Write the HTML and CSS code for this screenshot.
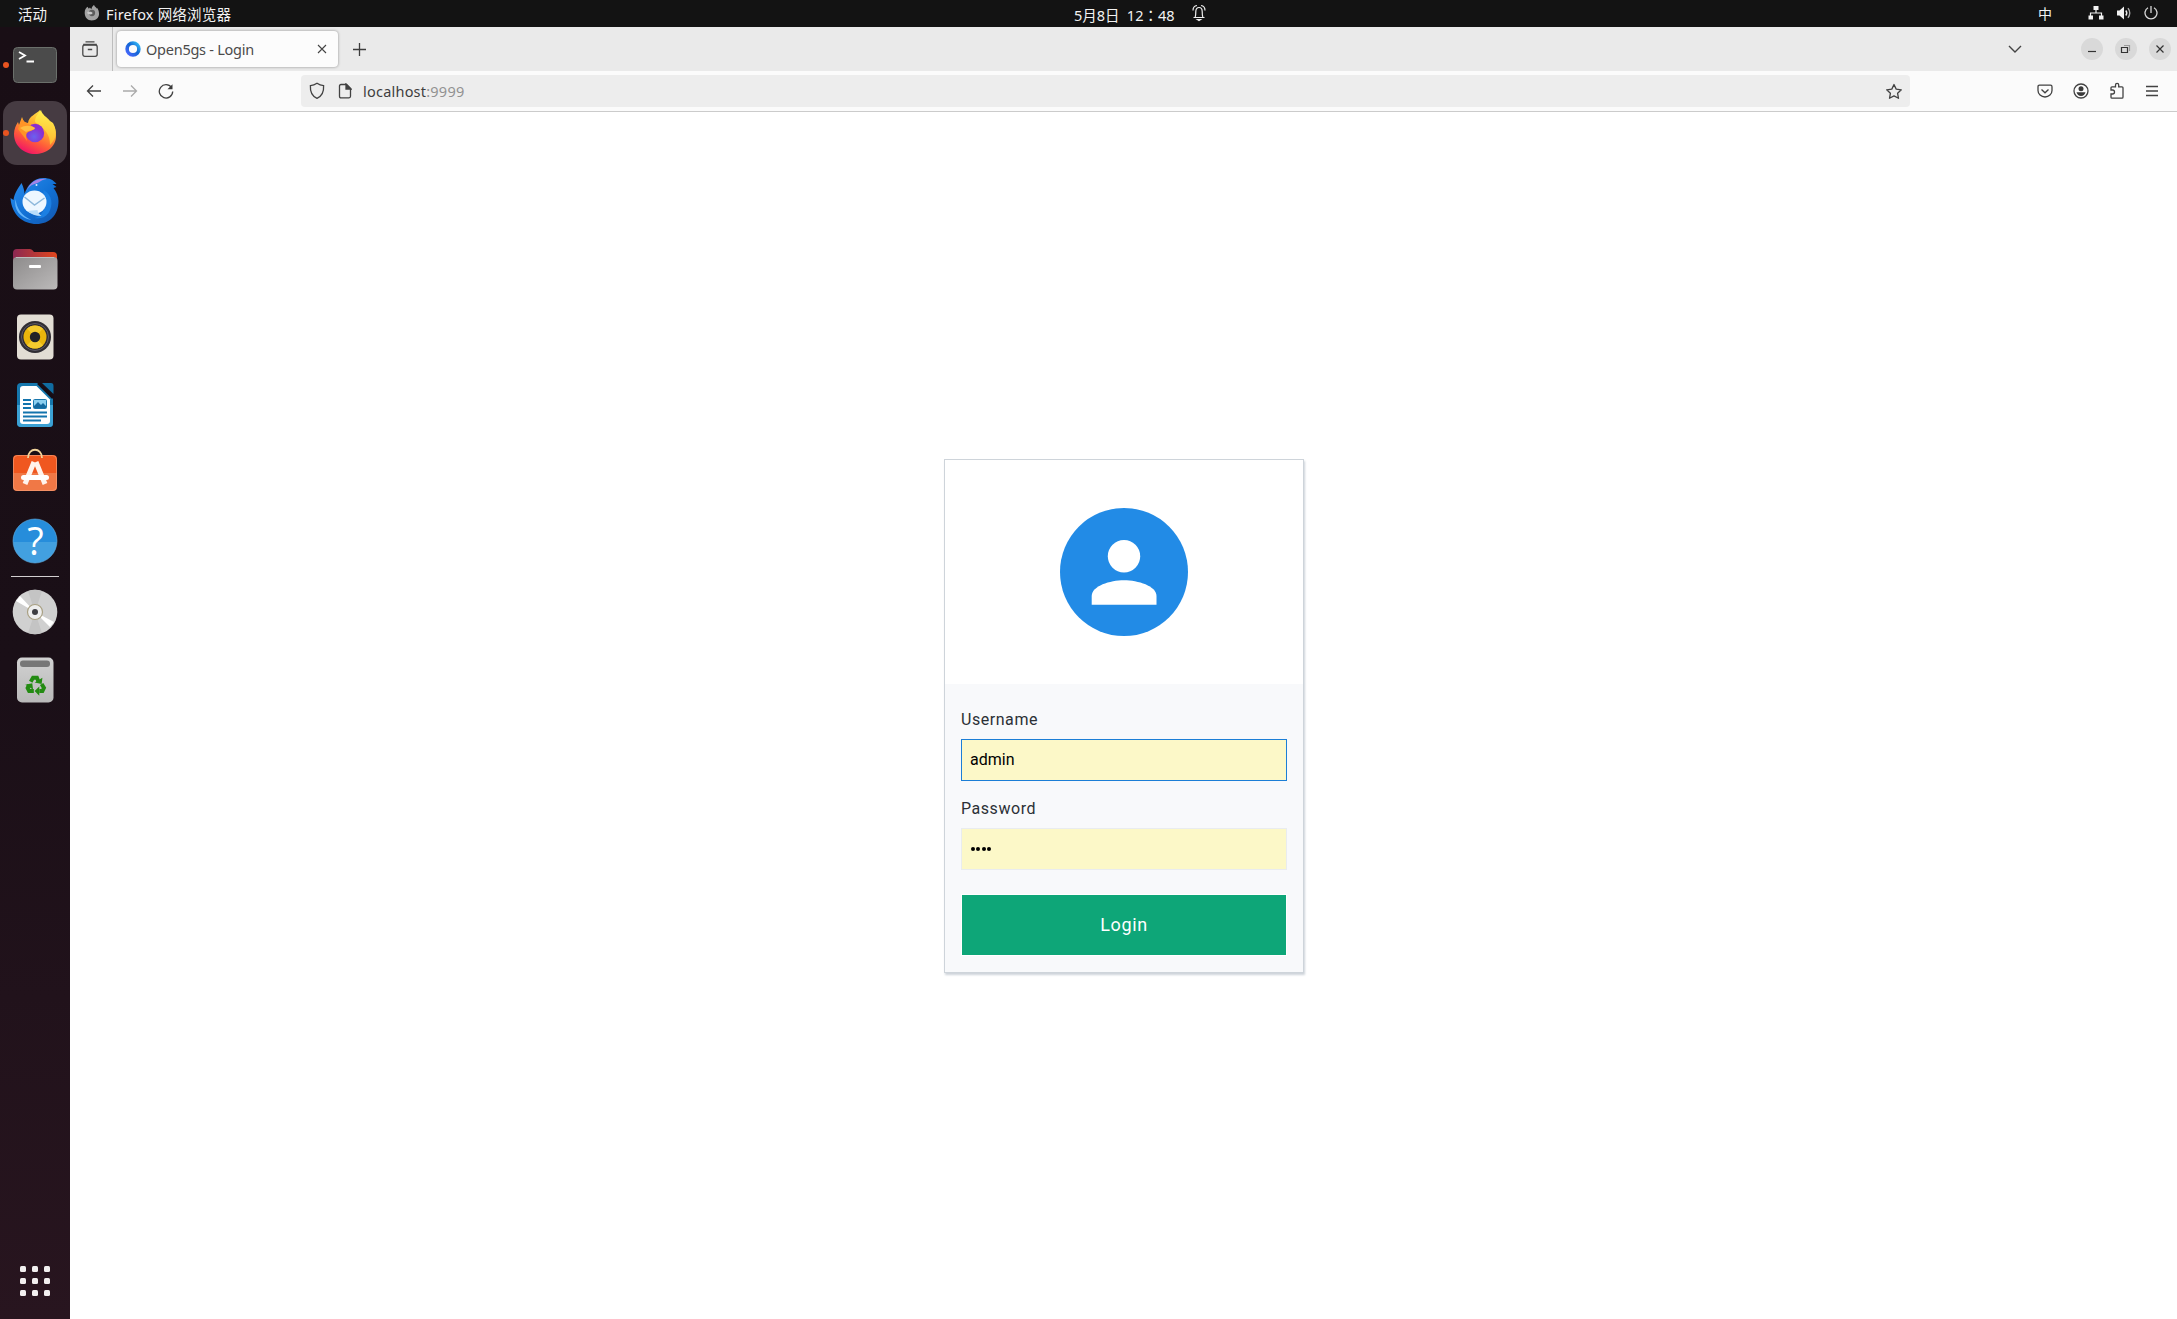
FILE: index.html
```html
<!DOCTYPE html>
<html lang="zh-CN">
<head>
<meta charset="utf-8">
<title>Open5gs - Login</title>
<link rel="stylesheet" href="styles.css">
</head>
<body>
<div class="desktop">
  <header class="topbar">
    <div class="top-left">
      <span class="activities">活动</span>
      <svg class="app-mini" width="16" height="16" viewBox="0 0 44 46"><path d="M1 22C1 13 5 9 9 5l4 6 3-4 4 5C22 4 27 0 28 0c1 5 5 6 8 10l2-1c8 16 5 32-12 35C10 46 1 36 1 22z" fill="#a2a2a2"/><circle cx="22" cy="23" r="9" fill="#5c5c5c"/><path d="M8 20c8-1 13-1 16 3-4 6-9 4-14 3z" fill="#c8c8c8"/></svg>
      <span class="app-name">Firefox 网络浏览器</span>
    </div>
    <div class="top-clock">
      <span class="clock">5月8日&ensp;12<span class="colon" lang="zh-TW">：</span>48</span>
      <svg width="14" height="18" viewBox="0 0 14 18" fill="none" stroke="#eee" stroke-width="1.2"><path d="M1.5 13.500h11M3.200 13c.6-2 .6-3.500.6-5.500C3.800 5 5 3.500 7 3.500S10.200 5 10.200 7.500c0 2 0 3.500.6 5.500M1 6.500C1 4 2.500 1.800 5 1.500M13 6.500C13 4 11.500 1.800 9 1.500"/><path d="M5.500 15.500h3l-1.500 1z" fill="#eee"/></svg>
    </div>
    <div class="top-right">
      <span class="ime">中</span>
      <svg class="net" width="16" height="14" viewBox="0 0 16 14"><path d="M5.500 0h5v4h-5zM.5 9.500h4.500v4H.500zM11 9.500h4.500v4H11z" fill="#f2f2f2"/><path d="M8 4v3M2.500 10V7h11v3" fill="none" stroke="#f2f2f2" stroke-width="1.200"/></svg>
      <svg class="vol" width="16" height="14" viewBox="0 0 16 14"><path d="M1 4.500h2.500L8 .5v13L3.500 9.500H1z" fill="#f2f2f2"/><path d="M9.800 4.500q2 2.500 0 5" fill="none" stroke="#eee" stroke-width="1.400"/><path d="M12 2.200q3.500 4.800 0 9.600" fill="none" stroke="#aaa" stroke-width="1.400"/></svg>
      <svg class="power" width="14" height="14" viewBox="0 0 14 14" fill="none" stroke="#d8d8d8" stroke-width="1.300"><path d="M7 0v7M4 1.700a6 6 0 1 0 6 0"/></svg>
    </div>
  </header>

  <div class="workspace">
    <nav class="dock">
      <div class="dock-item running">
        <svg viewBox="0 0 64 64"><rect x="10.500" y="14.500" width="43" height="35" rx="4" fill="#4b4b4b" stroke="#6b706b"/><path d="M16 19l6 3.500-6 3.500M23.500 28.500h7.500" fill="none" stroke="#fff" stroke-width="1.800"/></svg>
      </div>
      <div class="dock-item running active">
        <svg viewBox="0 0 64 64">
          <defs>
            <linearGradient id="ff" x1=".8" y1="0" x2=".3" y2="1"><stop offset="0" stop-color="#fff04a"/><stop offset=".4" stop-color="#ffab2e"/><stop offset=".7" stop-color="#ff5a3a"/><stop offset="1" stop-color="#f0106a"/></linearGradient>
            <linearGradient id="ffy" x1=".6" y1="0" x2=".5" y2="1"><stop offset="0" stop-color="#fff350"/><stop offset="1" stop-color="#ffb52e"/></linearGradient>
            <radialGradient id="ffp" cx=".45" cy=".7"><stop offset="0" stop-color="#6a62f0"/><stop offset="1" stop-color="#8a2fd0"/></radialGradient>
          </defs>
          <path d="M11 33c0-5 2-9 4-12l1 3 3-8 2 5 4 1c1-7 8-9 12-13 1 5 6 7 9 11l3 2c3 4 4 8 4 13 0 11-10 18-21 18S11 45 11 33z" fill="url(#ff)"/>
          <path d="M32 21c0-6 4-9 6-12 1 5 6 7 9 11l3 2c5 9 3 16-3 22 0-11-5-16-15-23z" fill="url(#ffy)"/>
          <circle cx="32" cy="32" r="9.200" fill="url(#ffp)"/>
          <path d="M15 28l4-10 3 3 5 3 5 3c-1 3-5 2-8 5-2 3 0 6 0 8z" fill="#ff9426"/>
          <path d="M17 27c5-3 10-3 15 0-2 3-6 2-9 4z" fill="#ffbd43"/>
        </svg>
      </div>
      <div class="dock-item">
        <svg viewBox="0.5 1 64 64">
          <defs><linearGradient id="tb" x1="0" y1="0" x2="1" y2="1"><stop offset="0" stop-color="#2b8ff0"/><stop offset=".55" stop-color="#1170d4"/><stop offset="1" stop-color="#1456ad"/></linearGradient></defs>
          <path d="M8 30l3 2c1-7 4-11 8-17 2 4 3 8 3 11 3-9 9-16 19-16 6 0 10 2 13 6h-4l4 3-3 1c3 4 5 8 5 13 0 14-9 23-22 23S9 47 8 30z" fill="url(#tb)"/>
          <path d="M24 23c4-9 10-13 20-12-6 1-7 4-12 5-4 1-6 3-8 7z" fill="#a484e8"/>
          <path d="M13 31c1 9 6 17 16 21-12-2-18-11-16-21z" fill="#64b5fa"/>
          <path d="M41 22c9 5 10 15 5 23-4 5-9 6-14 5 5-1 7-4 9-8z" fill="#1c7fe2"/>
          <ellipse cx="32" cy="34" rx="12" ry="11.500" fill="#eef7ff"/><path d="M25 43q5 5 14 5-4-3-4-6z" fill="#b9defb"/>
          <path d="M22 29l10 8 10-7" fill="none" stroke="#8fb9dc" stroke-width="1.500"/><circle cx="34" cy="17" r="1" fill="#d8eaff"/>
        </svg>
      </div>
      <div class="dock-item">
        <svg viewBox="0 0 64 64">
          <defs><linearGradient id="fo"><stop offset="0" stop-color="#8b2852"/><stop offset="1" stop-color="#e2471d"/></linearGradient><linearGradient id="fg" x1="0" y1="0" x2="1" y2="1"><stop offset="0" stop-color="#8d8b8b"/><stop offset="1" stop-color="#bcbaba"/></linearGradient></defs>
          <path d="M10 26V16q0-4 4-4h13q2 0 4 3h19q4 0 4 4v10H10z" fill="url(#fo)"/>
          <rect x="10" y="20" width="44.500" height="32.500" rx="4" fill="url(#fg)"/><path d="M13 20.500h38" stroke="#bdbdbd"/><rect x="26" y="28" width="12" height="3" rx="1" fill="#fff"/>
        </svg>
      </div>
      <div class="dock-item">
        <svg viewBox="0 0 64 64"><rect x="14" y="9.500" width="36.500" height="45" rx="4" fill="#e2ddd4"/><circle cx="32" cy="32" r="16" fill="#302d33"/><circle cx="32" cy="32" r="13.500" fill="none" stroke="#5d5a66"/><circle cx="32" cy="32" r="11.500" fill="#e9b50c"/><path d="M32 32L40 23.800A11.500 11.500 0 0 0 24 23.800zM32 32l8 8.200a11.500 11.500 0 0 1-16 0z" fill="#f4ca2e"/><circle cx="32" cy="32" r="5.200" fill="#232327"/></svg>
      </div>
      <div class="dock-item">
        <svg viewBox="0 0 64 64">
          <path d="M18 10h17l15 15v26q0 3-3 3H18q-4 0-4-4V14q0-4 4-4z" fill="#1577ad"/><path d="M14 32h36v18q0 4-4 4H18q-4 0-4-4z" fill="#3ba1d4"/>
          <path d="M39 10h9q2.500 0 2.500 3v8z" fill="#106ca0"/><path d="M20 13h13.500L47 26.500V48q0 3-3 3H20q-3 0-3-3V16q0-3 3-3z" fill="#fff"/><path d="M35 10l15 15" stroke="#160d15" stroke-width="2.500"/>
          <path d="M20 27h8M20 31h8M20 35h8M20 39.500h24M20 43.500h24M20 47.500h18" stroke="#1374ad" stroke-width="1.800"/>
          <rect x="30.500" y="26.500" width="13" height="9" rx="1" fill="#8bcff0" stroke="#1977ad"/><path d="M31 35v-2l4-4 3 3 2-2 3 3v2z" fill="#13699f"/>
        </svg>
      </div>
      <div class="dock-item">
        <svg viewBox="0 0 64 64">
          <path d="M10 18q0-4 4-4h36q4 0 4 4v14H10z" fill="#f0571f"/><path d="M10 32h44v14q0 4-4 4H14q-4 0-4-4z" fill="#f07846"/><rect x="10.500" y="14.500" width="43" height="35" rx="4" fill="none" stroke="#f39a72" stroke-opacity=".7"/>
          <path d="M25 17c0-11 14-11 14 0" fill="none" stroke="#f1d39b" stroke-width="1.800"/>
          <path d="M31 21L22 43M33 21l9 22" stroke="#fff3ec" stroke-width="5"/><rect x="18" y="34" width="28" height="5" rx="2.500" fill="#fff"/>
        </svg>
      </div>
      <div class="dock-item">
        <svg viewBox="0 0 64 64"><defs><linearGradient id="he" x1="0" y1="0" x2="0" y2="1"><stop offset=".52" stop-color="#268ddb"/><stop offset=".53" stop-color="#42a0e0"/></linearGradient></defs><circle cx="32" cy="32" r="22" fill="url(#he)" stroke="#62b2e8" stroke-width=".6"/><text x="32.500" y="46" text-anchor="middle" class="help-mark">?</text></svg>
      </div>
      <div class="dock-divider"></div>
      <div class="dock-item">
        <svg viewBox="0 0 64 64"><circle cx="32" cy="32" r="22.300" fill="#d0d0d0"/><path d="M32 32L25 11a22 22 0 0 1 14 0zM32 32l7 21a22 22 0 0 1-14 0z" fill="#c4c4c4"/><path d="M32 32L13 21l4-5zM32 32l19 10-4 5z" fill="#fff"/><circle cx="32" cy="32" r="7.500" fill="#eee" stroke="#a9a083" stroke-width="1.200"/><circle cx="32" cy="32" r="3" fill="#3d3d42"/></svg>
      </div>
      <div class="dock-item">
        <svg viewBox="0 0 64 64"><defs><linearGradient id="tr" x1="0" y1="0" x2="0" y2="1"><stop offset="0" stop-color="#d1d1d1"/><stop offset="1" stop-color="#b9b9b9"/></linearGradient></defs><rect x="14" y="9.500" width="36.500" height="45" rx="5" fill="url(#tr)"/><rect x="17" y="12.500" width="30" height="6.500" rx="3" fill="#777"/><g transform="translate(32 38) scale(.78) translate(-31.500 -38.500)"><g fill="none" stroke="#238b12" stroke-width="5"><path d="M26 33l3-5h5l2 5M40 36l3 5-2 4h-4M30 45h-6l-2-4 2-4"/></g><path d="M31 34l9 2 1-8zM37 39l-6 6 6 6zM19 37l9-2 1 8z" fill="#238b12"/></g></svg>
      </div>
      <div class="app-grid"><i></i><i></i><i></i><i></i><i></i><i></i><i></i><i></i><i></i></div>
    </nav>

    <main class="browser">
      <div class="tabstrip">
        <div class="view-button"><svg width="16" height="16" viewBox="0 0 16 16" fill="none" stroke="#4a4a4a" stroke-width="1.300"><path d="M3.500.8h9M1.200 3.500h13.600M5.800 8.500h4.400"/><rect x=".8" y="4" width="14.400" height="11.300" rx="2"/></svg></div>
        <div class="tab">
          <svg width="16" height="16" viewBox="0 0 16 16"><defs><linearGradient id="fav" x1="1" y1="0" x2="0" y2="1"><stop offset="0" stop-color="#35bdf8"/><stop offset=".45" stop-color="#1266d3"/><stop offset="1" stop-color="#4b67ff"/></linearGradient></defs><circle cx="8" cy="8" r="5.900" fill="none" stroke="url(#fav)" stroke-width="3.600"/></svg>
          <span class="tab-title">Open5gs - Login</span>
          <svg width="10" height="10" viewBox="0 0 10 10" stroke="#444" stroke-width="1.100"><path d="M1 1l8 8M9 1L1 9"/></svg>
        </div>
        <svg class="new-tab" width="13" height="13" viewBox="0 0 13 13" stroke="#3c3c3c" stroke-width="1.300"><path d="M6.500 0v13M0 6.500h13"/></svg>
        <svg class="all-tabs" width="14" height="8" viewBox="0 0 14 8" fill="none" stroke="#444" stroke-width="1.400"><path d="M1 1l6 6 6-6"/></svg>
        <div class="window-buttons">
          <span><svg viewBox="0 0 22 22"><path d="M7 13.500h8"/></svg></span>
          <span><svg viewBox="0 0 22 22"><path d="M6.500 9.500h6v5h-6z"/><path d="M9 7.500h5.500v5.500" stroke="#999"/></svg></span>
          <span><svg viewBox="0 0 22 22"><path d="M7.500 7.500l7 7M14.500 7.500l-7 7"/></svg></span>
        </div>
      </div>

      <div class="toolbar">
        <div class="nav-buttons">
          <svg width="16" height="16" viewBox="0 0 16 16"><path d="M15 8H1.500M7 2.500L1.500 8 7 13.500"/></svg>
          <svg class="disabled" width="16" height="16" viewBox="0 0 16 16"><path d="M1 8h13.500M9 2.500L14.500 8 9 13.500"/></svg>
          <svg width="16" height="16" viewBox="0 0 16 16"><path d="M13.500 4.500A6.700 6.700 0 1 0 14.700 8.500"/><path d="M14.500 1.300v5h-5z" fill="#3a3a3a" stroke="none"/></svg>
        </div>
        <div class="urlbar">
          <svg width="16" height="18" viewBox="0 0 16 18"><path d="M8 1.300Q11 3.500 14.600 3.700C15 10 12 14.500 8 16.300 4 14.500 1 10 1.400 3.700 5 3.500 8 1.300 8 1.300z"/></svg>
          <svg class="page-icon" width="14" height="16" viewBox="0 0 14 16"><path d="M3 1.500h5.500l4 4v7.800q0 1.500-1.500 1.500H3q-1.500 0-1.500-1.500V3Q1.500 1.500 3 1.500z"/><path d="M8 1v5h5z" fill="#444"/></svg>
          <span class="url">localhost<em>:9999</em></span>
          <svg class="star" width="18" height="17" viewBox="0 0 18 17"><path d="M9 1.500l2.200 4.600 5.100.7-3.700 3.500.9 5L9 12.900l-4.500 2.400.9-5L1.700 6.800l5.100-.7z" stroke-linejoin="round"/></svg>
        </div>
        <div class="tools">
          <svg width="16" height="16" viewBox="0 0 16 16"><path d="M2.500 2.200h11q1.500 0 1.500 1.500V7.500a7 6.500 0 0 1-14 0V3.700q0-1.500 1.500-1.500z"/><path d="M4.500 6.500L8 9.800l3.500-3.300"/></svg>
          <svg width="16" height="16" viewBox="0 0 16 16"><circle cx="8" cy="8" r="7"/><circle cx="8" cy="5.800" r="2.500" fill="#3a3a3a" stroke="none"/><path d="M3.500 9.300h9Q11.500 13 8 13T3.500 9.300z" fill="#3a3a3a" stroke="none"/></svg>
          <svg width="16" height="18" viewBox="0 0 16 18"><path d="M2 7V5.800q0-1 1-1h3.500V3a1.500 1.500 0 0 1 3.200 0v1.800H13q1 0 1 1V15q0 1.200-1 1.200H3q-1 0-1-1V12h1.500a1.800 1.800 0 0 0 0-4H2z"/></svg>
          <svg width="14" height="14" viewBox="0 0 14 14"><path d="M1 2.500h12M1 7h12M1 11.500h12"/></svg>
        </div>
      </div>

      <section class="page">
        <form class="card">
          <div class="card-head">
            <svg width="128" height="128" viewBox="0 0 128 128"><circle cx="64" cy="64" r="64" fill="#228be6"/><circle cx="64" cy="48.300" r="16.200" fill="#fff"/><path d="M31.700 96.800V88C31.700 78 50 72.300 64 72.300S96.500 78 96.500 88v8.800z" fill="#fff"/></svg>
          </div>
          <div class="card-body">
            <div class="field"><label for="username">Username</label><input class="focused" id="username" type="text" value="admin"></div>
            <div class="field"><label for="password">Password</label><div class="input secret" id="password"><i></i><i></i><i></i><i></i></div></div>
            <button class="submit" type="button">Login</button>
          </div>
        </form>
      </section>
    </main>
  </div>
</div>
</body>
</html>
```
FILE: styles.css
```css
* { box-sizing: border-box; }
body { margin: 0; background: #fff; font-family: "Noto Sans", "Noto Sans CJK SC", sans-serif; font-size: 14.5px; }
svg { display: block; flex: none; }
.desktop { display: flex; flex-direction: column; width: 100%; height: 1319px; overflow: hidden; }

.topbar { display: grid; grid-template-columns: 1074px 1fr 147px; height: 27px; background: #131313; color: #f2f2f2; }
.top-left, .top-clock, .top-right { display: flex; align-items: center; height: 27px; white-space: nowrap; line-height: 24px; }
.top-left { padding-left: 18px; }
.activities { width: 66px; }
.app-mini { margin-top: -2px; }
.app-name { margin-left: 6px; letter-spacing: .2px; }
.clock { width: 101px; margin-right: 17px; padding-top: 2px; font-size: 14.5px; }
.colon { font-family: "Noto Sans CJK TC", sans-serif; }
.top-clock svg { margin-top: -2px; }
.top-right { padding-left: 8px; }
.ime { width: 50px; font-size: 14px; }
.top-right svg { margin-top: -2px; }
.vol { margin-left: 12px; }
.power { margin-left: 12px; }

.workspace { display: flex; flex: 1; min-height: 0; }
.dock { display: flex; flex-direction: column; align-items: center; gap: 4px; width: 70px; padding: 6px 0 23px; background: linear-gradient(#190e15 0%, #1a0f17 50%, #28151f 100%); }
.dock-item { position: relative; flex: none; width: 64px; height: 64px; border-radius: 14px; }
.dock-item svg { width: 64px; height: 64px; }
.active { background: #463b42; }
.running::before { content: ""; position: absolute; left: 0; top: 29px; width: 6px; height: 6px; border-radius: 50%; background: #e95420; }
.help-mark { font: 38px "Open Sans", "Noto Sans", sans-serif; fill: #fff; }
.dock-divider { flex: none; width: 48px; height: 1px; margin: -1px 0; background: #d2ced0; }
.app-grid { display: grid; grid-template-columns: repeat(3, 6px); gap: 6px; margin-top: auto; }
.app-grid i { height: 6px; border-radius: 1.5px; background: #f1efef; }

.browser { display: flex; flex: 1; flex-direction: column; min-width: 0; }
.tabstrip { display: flex; align-items: center; height: 44px; padding-right: 6px; background: #eaeaea; }
.view-button { display: flex; align-items: center; width: 43px; height: 44px; padding-left: 12px; border-right: 1px solid #bdbdbd; }
.tab { display: flex; align-items: center; width: 221px; height: 36px; margin-left: 4px; padding: 0 11px 0 8px; border-radius: 4px; background: #fcfcfc; box-shadow: 0 0 3px rgba(0,0,0,.4); color: #4b4b4b; }
.tab-title { flex: 1; margin-left: 5px; letter-spacing: -.25px; white-space: nowrap; }
.new-tab { margin: 1px 0 0 15px; }
.all-tabs { margin-left: auto; }
.window-buttons { display: flex; gap: 12px; margin-left: 59px; }
.window-buttons span { width: 22px; height: 22px; border-radius: 50%; background: #d9d9d9; }
.window-buttons svg { fill: none; stroke: #333; stroke-width: 1.2; }

.toolbar { display: flex; align-items: center; height: 41px; border-bottom: 1px solid #cbcbcb; background: #fbfbfb; }
.toolbar svg { fill: none; stroke: #424242; stroke-width: 1.3; }
.toolbar .nav-buttons .disabled { stroke: #aaa; }
.nav-buttons { display: flex; gap: 20px; width: 231px; padding-left: 16px; }
.urlbar { display: flex; align-items: center; width: 1609px; height: 32px; padding: 0 7px 0 8px; border-radius: 4px; background: #ededed; color: #3e3e3e; }
.page-icon { margin-left: 13px; }
.url { margin-left: 11px; letter-spacing: .22px; }
.url em { color: #929292; font-style: normal; }
.star { margin-left: auto; }
.tools { display: flex; align-items: center; gap: 20px; margin-left: 127px; }

.page { display: flex; flex: 1; justify-content: center; align-items: flex-start; padding: 347px 0 0 1px; background: #fff; font-family: Roboto, sans-serif; }
.card { width: 360px; height: 514px; border: 1px solid #ced4da; box-shadow: 1px 2px 2px #ced4da; }
.card-head { display: flex; justify-content: center; padding: 48px 0; }
.card-body { padding: 16px; background: #f8f9fb; }
.field { padding: 8px 0; }
.field label { display: block; height: 24px; margin-bottom: 7px; color: #2b3036; font-size: 16px; letter-spacing: .55px; line-height: 24px; }
.field input, .input { display: flex; align-items: center; width: 100%; height: 42px; padding: 0 8px 2px; border: 1px solid #e9ecef; outline: 0; background: #fcf8c8; color: #000; font: 16px Roboto, sans-serif; }
.field input.focused { border-color: #1c7ed6; }
.secret { gap: 1.4px; padding: 0 9px 1px; }
.secret i { width: 4px; height: 4px; border-radius: 50%; background: #000; }
.submit { display: block; width: 100%; height: 62px; margin-top: 16px; padding: 0 0 2px; border: 1px solid #fff; background: #0ea678; color: #fff; font: 18px Roboto, sans-serif; letter-spacing: .6px; }
```
